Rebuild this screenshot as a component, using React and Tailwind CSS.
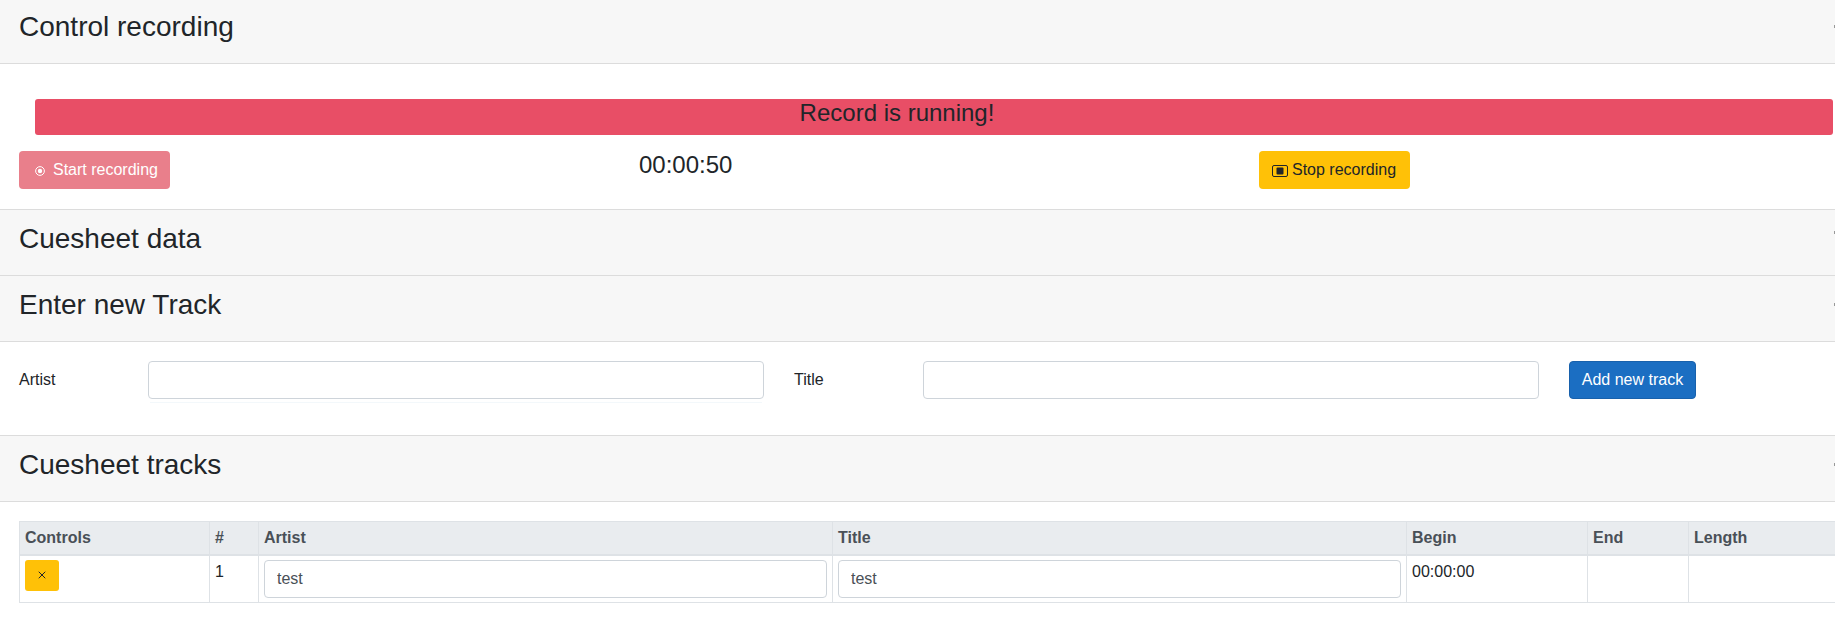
import { X } from 'lucide-react';

const font = 'font-["Liberation_Sans",Arial,sans-serif]';

/** Grey card header with the clipped collapse caret at the right edge */
function SectionHeader({ title, sizing, caretTop }) {
  return (
    <div className={`relative bg-[#f7f7f7] border-b border-[#dcdcdc] px-[19px] text-[28px] leading-[34px] text-[#212529] ${sizing}`}>
      {title}
      <span className={`absolute right-0 h-[3px] w-[1px] bg-[#999999] ${caretTop}`} />
    </div>
  );
}

function RecordIcon() {
  return (
    <svg width="10" height="10" viewBox="0 0 16 16" fill="none" className="mr-[8px] mt-[1px]">
      <circle cx="8" cy="8" r="7" stroke="currentColor" strokeWidth="1.6" />
      <circle cx="8" cy="8" r="3.5" fill="currentColor" />
    </svg>
  );
}

function StopIcon() {
  return (
    <svg width="16" height="12" viewBox="0 0 16 12" fill="none" className="mr-[4px] mt-[1px]">
      <rect x="0.5" y="0.5" width="15" height="11" rx="1.5" stroke="currentColor" />
      <rect x="4.5" y="2.5" width="7" height="7" rx="1" fill="currentColor" />
    </svg>
  );
}

function RecordingControl() {
  return (
    <div className="h-[146px] border-b border-[#dcdcdc] pl-[19px] pt-[35px]">
      <div className="ml-[16px] h-[36px] w-[1798px] rounded-[3px] bg-[#e84e66] pr-[74px] text-center text-[24px] leading-[28px] text-[#212529]">
        Record is running!
      </div>
      <div className="mt-[16px] grid w-[1860px] grid-cols-3">
        <div>
          <button className="flex h-[38px] w-[151px] items-center rounded-[4px] bg-[#e97f8b] pl-[16px] text-[16px] text-white">
            <RecordIcon />
            Start recording
          </button>
        </div>
        <div className="text-[24px] leading-[28px] text-[#212529]">00:00:50</div>
        <div>
          <button className="flex h-[38px] w-[151px] items-center rounded-[4px] bg-[#ffc107] pl-[13px] text-[16px] text-[#212529]">
            <StopIcon />
            Stop recording
          </button>
        </div>
      </div>
    </div>
  );
}

function NewTrackForm() {
  return (
    <div className="flex h-[94px] items-start border-b border-[#dcdcdc] pl-[19px] pt-[19px] text-[16px] text-[#212529]">
      <label className="w-[129px] leading-[38px]">Artist</label>
      <div className="mr-[30px] w-[616px]">
        <input className="block h-[38px] w-full rounded-[4px] border border-[#ced4da] bg-white" />
        <div className="mx-[2px] mt-[3px] h-[1px] bg-[#f3f8fb]" />
      </div>
      <label className="w-[129px] leading-[38px]">Title</label>
      <input className="mr-[30px] h-[38px] w-[616px] rounded-[4px] border border-[#ced4da] bg-white" />
      <button className="h-[38px] w-[127px] rounded-[4px] border border-[#1861ac] bg-[#1b6ec2] text-white">Add new track</button>
    </div>
  );
}

function TextCellInput({ value }) {
  return (
    <input
      defaultValue={value}
      className="block h-[38px] w-full rounded-[4px] border border-[#ced4da] bg-white px-[12px] text-[16px] text-[#495057]"
    />
  );
}

function TracksTable() {
  const heads = [
    ['Controls', 'w-[190px]'],
    ['#', 'w-[49px]'],
    ['Artist', 'w-[574px]'],
    ['Title', 'w-[574px]'],
    ['Begin', 'w-[181px]'],
    ['End', 'w-[101px]'],
    ['Length', 'w-[191px]'],
  ];
  const cell = 'border border-[#dee2e6] px-[5px] py-[4px] align-top leading-[24px]';

  return (
    <div className="pl-[19px] pt-[19px]">
      <table className="w-[1860px] table-fixed border-collapse text-[16px] text-[#212529]">
        <thead>
          <tr className="h-[33px] bg-[#e9ecef] text-[#495057]">
            {heads.map(([label, width]) => (
              <th key={label} className={`${width} border border-b-2 border-[#dee2e6] px-[5px] text-left align-middle font-bold`}>
                {label}
              </th>
            ))}
          </tr>
        </thead>
        <tbody>
          <tr>
            <td className={cell}>
              <button className="flex h-[31px] w-[34px] items-center justify-center rounded-[3px] bg-[#ffc107] text-[#212529]">
                <X size={12} strokeWidth={2} />
              </button>
            </td>
            <td className={cell}>1</td>
            <td className={cell}><TextCellInput value="test" /></td>
            <td className={cell}><TextCellInput value="test" /></td>
            <td className={cell}>00:00:00</td>
            <td className={cell}></td>
            <td className={cell}></td>
          </tr>
        </tbody>
      </table>
    </div>
  );
}

export default function App() {
  return (
    <div className={`h-[639px] w-[1835px] overflow-hidden bg-white ${font}`}>
      <SectionHeader title="Control recording" sizing="h-[64px] pt-[10px]" caretTop="top-[25px]" />
      <RecordingControl />
      <SectionHeader title="Cuesheet data" sizing="h-[66px] pt-[12px]" caretTop="top-[21px]" />
      <SectionHeader title="Enter new Track" sizing="h-[66px] pt-[12px]" caretTop="top-[27px]" />
      <NewTrackForm />
      <SectionHeader title="Cuesheet tracks" sizing="h-[66px] pt-[12px]" caretTop="top-[27px]" />
      <TracksTable />
    </div>
  );
}
